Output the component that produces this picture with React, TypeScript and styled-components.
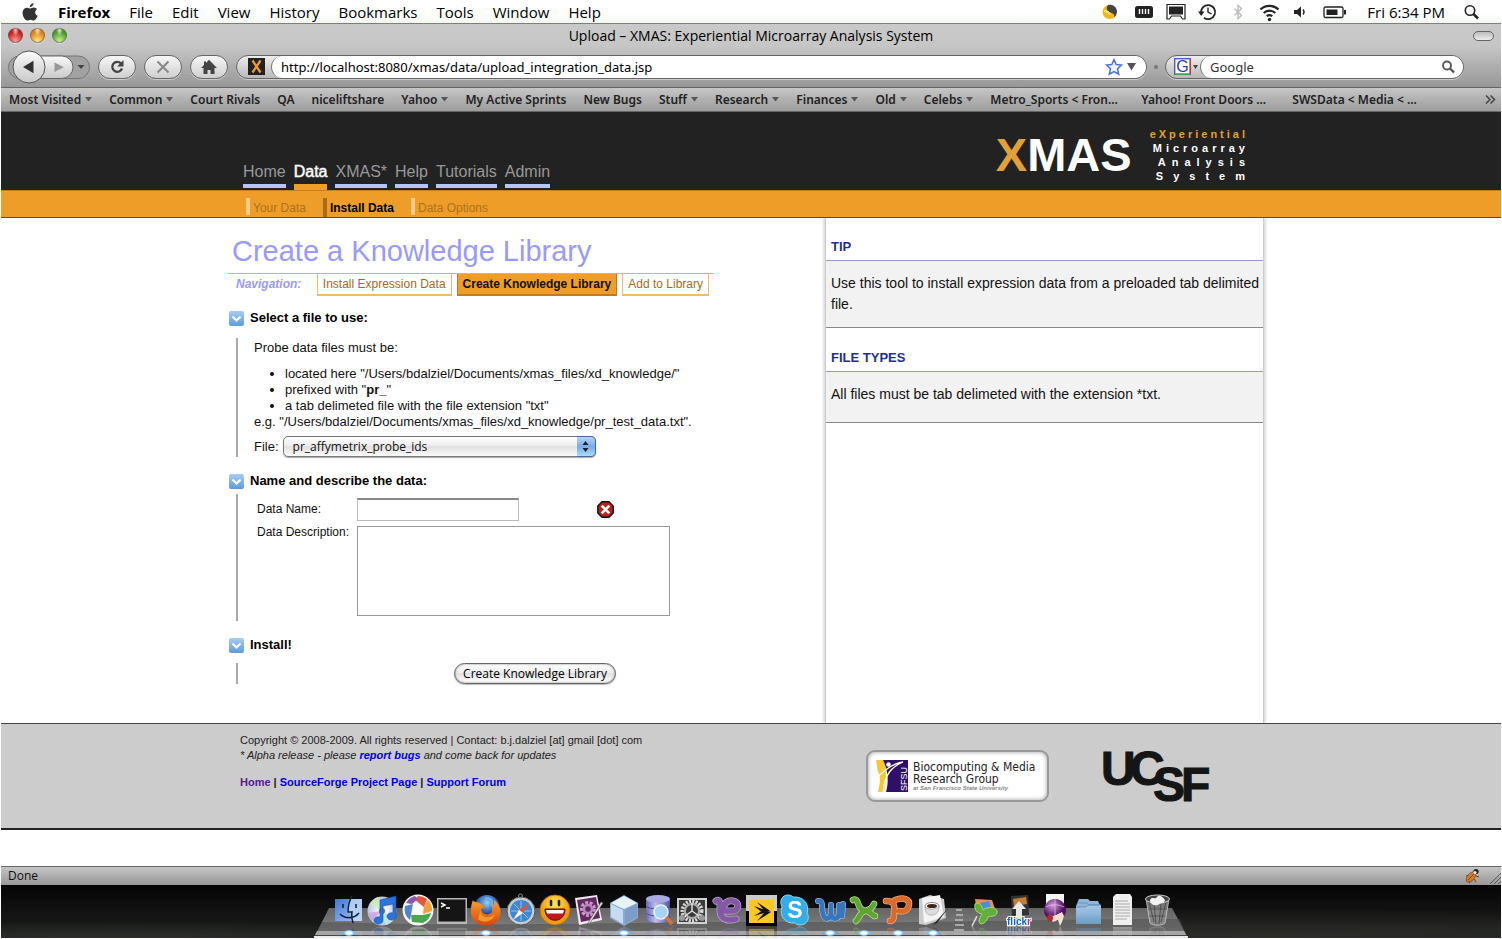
import React from "react";
import styled, { createGlobalStyle } from "styled-components";

const ui = `"Open Sans", "Noto Sans", sans-serif`;
const uiWide = `"Noto Sans", "Open Sans", sans-serif`;
const body = `"Liberation Sans", Arial, sans-serif`;

const Global = createGlobalStyle`
  * { box-sizing: border-box; }
  body { margin: 0; background: #fff; font-family: ${body}; font-size: 13px; color: #111; }
  a { text-decoration: none; color: inherit; }
  button, input, select, textarea { font: inherit; color: inherit; }
  svg { display: block; flex: none; overflow: visible; }
`;

const Screen = styled.div`
  display: flex;
  flex-direction: column;
  min-height: 100vh;
  padding: 0 1px 1px;
`;

/* ---------- system menu bar ---------- */
const MenuBar = styled.header`
  display: flex;
  align-items: center;
  justify-content: space-between;
  height: 23px;
  padding: 0 20px;
  background: linear-gradient(#fff 60%, #f3f8ee);
  font-family: ${ui};
  font-size: 15px;
  color: #000;
`;
const MenuGroup = styled.nav<{ $gap: number }>`
  display: flex;
  align-items: center;
  gap: ${(p) => p.$gap}px;
`;
const MenuItem = styled.button<{ $strong?: boolean }>`
  border: 0;
  padding: 0;
  background: none;
  line-height: 22px;
  font-weight: ${(p) => (p.$strong ? 700 : 400)};
`;
const Clock = styled.time`
  padding-left: 3px;
  line-height: 22px;
  white-space: nowrap;
`;

/* ---------- browser window chrome ---------- */
const Chrome = styled.div`
  border-top: 1px solid #7c7f7a;
  background: linear-gradient(#c9c9c9 0, #c6c6c6 22px, #969696 64px);
  font-family: ${ui};
`;
const TitleBar = styled.div`
  display: grid;
  grid-template-columns: 80px 1fr 80px;
  align-items: center;
  height: 23px;
  padding: 0 7px;
`;
const Title = styled.h2`
  margin: 0;
  text-align: center;
  font-size: 14px;
  font-weight: 400;
  line-height: 20px;
  color: #000;
`;
const Lights = styled.div`
  display: flex;
  gap: 7px;
`;
const Light = styled.button<{ $tone: string; $glow: string }>`
  width: 15px;
  height: 15px;
  padding: 0;
  border: 1px solid #5558;
  border-radius: 50%;
  background: radial-gradient(ellipse at 50% 10%, #fffc 0, #fff0 35%),
    radial-gradient(circle at 50% 90%, ${(p) => p.$glow} 0, ${(p) => p.$tone} 65%);
  box-shadow: 0 1px 0 #ddd;
`;
const Pill = styled.button`
  justify-self: end;
  width: 21px;
  height: 10px;
  padding: 0;
  border: 1px solid #666;
  border-radius: 5px;
  background: linear-gradient(#bbb, #eee);
`;
const Tools = styled.div`
  display: flex;
  align-items: center;
  gap: 8px;
  height: 40px;
  padding: 0 37px 1px 7px;
`;
const RoundButton = styled.button`
  display: flex;
  align-items: center;
  justify-content: center;
  width: 38px;
  height: 24px;
  padding: 0;
  border: 1px solid #666;
  border-radius: 12px;
  background: linear-gradient(#f6f6f6, #cfcfcf);
  box-shadow: 0 1px 0 #ccc;
`;
const Field = styled.div<{ $width?: number }>`
  display: flex;
  flex: ${(p) => (p.$width ? `0 0 ${p.$width}px` : "1")};
  height: 24px;
  overflow: hidden;
  border: 1px solid #666;
  border-radius: 12px;
  background: linear-gradient(#eee, #b9b9b9);
  box-shadow: 0 1px 0 #ccc;
`;
const FieldLead = styled.button<{ $pad: number }>`
  display: flex;
  align-items: center;
  justify-content: flex-end;
  gap: 2px;
  width: 34px;
  padding: 0 ${(p) => p.$pad}px 0 0;
  border: 0;
  background: none;
`;
const FieldBody = styled.div`
  display: flex;
  flex: 1;
  align-items: center;
  gap: 3px;
  padding: 0 8px 0 9px;
  border-left: 1px solid #777;
  border-radius: 12px;
  background: #fff;
`;
const FieldInput = styled.input<{ $soft?: boolean }>`
  flex: 1;
  min-width: 0;
  padding: 0;
  border: 0;
  outline: 0;
  background: none;
  font-family: ${uiWide};
  font-size: 13px;
  color: ${(p) => (p.$soft ? "#333" : "#000")};
`;
const Dot = styled.span`
  width: 4px;
  height: 4px;
  margin: 0 -1px;
  border-radius: 50%;
  background: #777;
`;
const Bookmarks = styled.nav`
  display: flex;
  align-items: center;
  gap: 17px;
  height: 25px;
  padding: 0 5px 0 8px;
  border-top: 1px solid #666;
  border-bottom: 1px solid #666;
  background: linear-gradient(#c6c6c6, #9c9c9c);
  font-family: ${uiWide};
  font-size: 12px;
  font-weight: 600;
  line-height: 20px;
  color: #222;
  white-space: nowrap;
`;
const Bookmark = styled.a<{ $long: boolean }>`
  display: flex;
  align-items: center;
  gap: 4px;
  min-width: ${(p) => (p.$long ? "134px" : "0")};
`;
const More = styled.button`
  margin-left: auto;
  padding: 0;
  border: 0;
  background: none;
`;

/* ---------- site header ---------- */
const SiteHeader = styled.header`
  background: #222;
`;
const Wrap = styled.div`
  display: flex;
  justify-content: space-between;
  width: 100%;
  max-width: 1046px;
  margin: 0 auto;
  padding-right: 10px;
`;
const TopRow = styled(Wrap)`
  align-items: flex-end;
  height: 78px;
  padding: 0 29px 0 15px;
`;
const MainNav = styled.nav`
  display: flex;
  align-items: flex-end;
  gap: 8px;
`;
const MainLink = styled.a<{ $active?: boolean }>`
  border-bottom: ${(p) => (p.$active ? "6px solid #ee9d28" : "4px solid #b9c4f4")};
  margin-bottom: ${(p) => (p.$active ? 0 : 2)}px;
  padding-bottom: 3px;
  font-size: 16px;
  line-height: 18px;
  color: ${(p) => (p.$active ? "#fff" : "#999")};
  -webkit-text-stroke: ${(p) => (p.$active ? "1px #fff8" : "0")};
`;
const Brand = styled.div`
  display: flex;
  align-items: center;
  gap: 18px;
  padding-bottom: 7px;
  font-weight: 700;
  color: #fff;
`;
const BrandName = styled.div`
  font-size: 47px;
  line-height: 52px;
`;
const Amber = styled.span`
  color: #e2a039;
`;
const BrandLines = styled.div`
  font-size: 11px;
  line-height: 14px;
  text-align: right;
`;
const BrandLine = styled.div<{ $track: number }>`
  letter-spacing: ${(p) => p.$track}px;
  margin-right: -${(p) => p.$track}px;
`;
const SubBar = styled.div`
  border-top: 1px solid #c37f1e;
  border-bottom: 1px solid #5d4a2d;
  background: #ee9d28;
`;
const SubNav = styled(Wrap)`
  justify-content: flex-start;
  gap: 17px;
  height: 26px;
  padding: 7px 0 0 18px;
`;
const SubLink = styled.a<{ $active?: boolean }>`
  height: ${(p) => (p.$active ? 19 : 17)}px;
  padding-left: 3px;
  border-left: 4px solid ${(p) => (p.$active ? "#a66c19" : "#f8cd8c")};
  font-size: 12px;
  font-weight: ${(p) => (p.$active ? 700 : 400)};
  line-height: 20px;
  color: ${(p) => (p.$active ? "#000" : "#b0711a")};
`;

/* ---------- page body ---------- */
const PageBody = styled(Wrap)`
  align-items: stretch;
`;
const Content = styled.main`
  width: 486px;
  padding: 15px 0 39px;
`;
const Heading = styled.h1`
  margin: 0 0 4px 4px;
  font-size: 29px;
  font-weight: 400;
  line-height: 36px;
  color: #99f;
`;
const StepNav = styled.nav`
  display: flex;
  gap: 5px;
  padding: 0 5px 0 8px;
  border-top: 1px solid #f0b050;
  white-space: nowrap;
`;
const StepLabel = styled.span`
  margin-right: auto;
  font-size: 12px;
  font-weight: 700;
  font-style: italic;
  line-height: 20px;
  color: #99f;
`;
const Step = styled.a<{ $active?: boolean }>`
  padding: 0 5px;
  border: solid ${(p) => (p.$active ? "#c07c1c" : "#f3ba68")};
  border-width: 0 1px 2px;
  background: ${(p) => (p.$active ? "#ee9d28" : "#fff")};
  font-size: 12px;
  font-weight: ${(p) => (p.$active ? 700 : 400)};
  line-height: 20px;
  color: ${(p) => (p.$active ? "#111" : "#a56b1b")};
`;
const Section = styled.section`
  padding-top: 12px;
  & + & { padding-top: 14px; }
`;
const SectionHead = styled.h3`
  display: flex;
  align-items: center;
  gap: 6px;
  margin: 0;
  padding-left: 1px;
  font-size: 13px;
  font-weight: 700;
  line-height: 20px;
  color: #000;
`;
const SectionBody = styled.div<{ $indent: number; $gap: number }>`
  margin: ${(p) => p.$gap}px 0 0 8px;
  padding-left: ${(p) => p.$indent}px;
  border-left: 2px solid #aaa;
  font-size: 13px;
  line-height: 16px;
`;
const Para = styled.p`
  margin: 0;
  padding: 2px 0 10px;
`;
const List = styled.ul`
  margin: 0;
  padding: 0 0 0 31px;
  white-space: nowrap;
`;
const Example = styled.p`
  margin: 0 0 6px;
  white-space: nowrap;
`;
const FileRow = styled.div`
  display: flex;
  align-items: center;
  gap: 4px;
`;
const SelectBox = styled.div`
  position: relative;
  width: 313px;
`;
const Select = styled.select`
  display: block;
  width: 100%;
  height: 21px;
  padding: 0 26px 0 9px;
  appearance: none;
  border: 1px solid #777;
  border-radius: 5px;
  background: linear-gradient(#fff, #ededed 45%, #e0e0e0 50%, #fafafa);
  box-shadow: 0 1px 1px #aaa;
  font-family: ${ui};
  font-size: 12px;
`;
const Stepper = styled.span`
  position: absolute;
  top: 0;
  right: 0;
  display: flex;
  align-items: center;
  justify-content: center;
  width: 19px;
  height: 21px;
  border: 1px solid #456a9c;
  border-left: 0;
  border-radius: 0 5px 5px 0;
  background: linear-gradient(#b9d4f4, #78abea 50%, #a9dcfb);
  pointer-events: none;
`;
const FormGrid = styled.div`
  display: grid;
  grid-template-columns: 100px 1fr;
  row-gap: 5px;
  padding: 4px 0 5px;
  font-size: 12px;
`;
const Label = styled.label`
  line-height: 13px;
  align-self: start;
`;
const NameLabel = styled(Label)`
  line-height: 22px;
`;
const NameCell = styled.div`
  display: flex;
  align-items: center;
  gap: 78px;
`;
const TextInput = styled.input`
  width: 162px;
  height: 23px;
  border: 1px solid #bbb;
  border-top: 2px solid #888;
  background: #fff;
`;
const TextArea = styled.textarea`
  display: block;
  width: 313px;
  height: 90px;
  border: 1px solid #999;
  resize: none;
`;
const SubmitRow = styled.div`
  display: flex;
  padding-left: 216px;
`;
const Submit = styled.button`
  width: 162px;
  height: 21px;
  padding: 0;
  border: 1px solid #666;
  border-radius: 11px;
  background: linear-gradient(#fff, #eee 45%, #e2e2e2 50%, #fff);
  box-shadow: inset 0 0 2px #666, 0 1px 1px #bbb;
  font-family: ${ui};
  font-size: 12px;
  line-height: 17px;
  white-space: nowrap;
  color: #000;
`;

const Sidebar = styled.aside`
  width: 439px;
  border: solid #ccc;
  border-width: 0 1px;
  box-shadow: -2px 0 2px #ddd, 2px 0 2px #ddd;
  clip-path: inset(0 -4px);
`;
const TipTitle = styled.h3`
  margin: 0;
  padding: 19px 5px 4px;
  border-bottom: 1px solid #99c;
  font-size: 13px;
  line-height: 19px;
  color: #1e2f92;
`;
const TipText = styled.p`
  min-height: 51px;
  margin: 0 0 1px;
  padding: 12px 0 12px 5px;
  border-bottom: 1px solid #888;
  background: #f2f2f2;
  font-size: 14px;
  line-height: 21px;
`;

/* ---------- footer ---------- */
const Footer = styled.footer`
  border-top: 1px solid #444;
  border-bottom: 2px solid #222;
  background: #ccc;
`;
const FooterRow = styled(Wrap)`
  height: 104px;
  padding: 9px 64px 0 12px;
`;
const Legal = styled.div`
  font-size: 11px;
  line-height: 15px;
  color: #222;
`;
const Line = styled.p<{ $italic?: boolean }>`
  margin: 0;
  font-style: ${(p) => (p.$italic ? "italic" : "normal")};
`;
const Links = styled.p`
  margin: 12px 0 0;
  font-weight: 700;
`;
const FootLink = styled.a<{ $visited?: boolean }>`
  font-weight: 700;
  color: ${(p) => (p.$visited ? "#551a8b" : "#0000e0")};
`;
const Logos = styled.div`
  display: flex;
  gap: 54px;
  padding-top: 17px;
`;
const Partner = styled.a`
  display: flex;
  align-items: center;
  gap: 4px;
  width: 183px;
  height: 52px;
  padding-left: 8px;
  border: 2px solid #999;
  border-radius: 9px;
  background: #fff;
  box-shadow: inset 0 0 4px #999;
  color: #222;
`;
const PartnerText = styled.span`
  display: flex;
  flex-direction: column;
  font-family: "DejaVu Sans Condensed", "DejaVu Sans", sans-serif;
  font-size: 12px;
  line-height: 12px;
  white-space: nowrap;
`;
const PartnerSmall = styled.i`
  font-family: ${body};
  font-size: 6px;
  font-weight: 700;
  line-height: 7px;
  color: #888;
`;

/* ---------- status bar and dock ---------- */
const Gap = styled.div`
  flex: 1;
  min-height: 36px;
`;
const StatusBar = styled.div`
  display: flex;
  align-items: center;
  justify-content: space-between;
  height: 19px;
  padding-left: 7px;
  border-top: 1px solid #666;
  background: linear-gradient(#c4c4c4, #979797);
  font-family: ${ui};
  font-size: 12px;
  line-height: 18px;
`;
const StatusIcons = styled.div`
  display: flex;
  gap: 10px;
`;
const Desktop = styled.div`
  position: relative;
  display: flex;
  justify-content: center;
  height: 53px;
  overflow: hidden;
  background: radial-gradient(ellipse at 85% 100%, #2c2d29, #2c2d2900 40%),
    radial-gradient(ellipse at 8% 100%, #2d2f2b, #2d2f2b00 22%),
    linear-gradient(#050505, #1d1f1d);
`;
const Shelf = styled.svg`
  position: absolute;
  top: 20px;
  left: 50%;
  margin-left: -437px;
`;
const DockRow = styled.div`
  position: relative;
  display: flex;
  width: 846px;
  padding: 9px 0 0 4px;
`;
const DockGroup = styled.div<{ $n: number }>`
  display: grid;
  flex: ${(p) => p.$n};
  grid-template-columns: repeat(${(p) => p.$n}, 1fr);
  justify-items: center;
  align-items: start;
`;
const DockApp = styled.button<{ $running?: boolean }>`
  position: relative;
  display: flex;
  align-items: flex-start;
  height: 44px;
  padding: 0;
  border: 0;
  background: none;
  svg { -webkit-box-reflect: below 0 linear-gradient(#0000 60%, #0006); }
  &::after {
    content: "";
    display: ${(p) => (p.$running ? "block" : "none")};
    position: absolute;
    left: 10px;
    top: 36px;
    width: 12px;
    height: 6px;
    border-radius: 50%;
    background: radial-gradient(#fff 30%, #6bbcff 60%, #6bbcff00);
  }
`;
const Divider = styled.svg`
  margin: 15px 3px 0;
`;

const Caret = () => (
  <svg width="7" height="5" viewBox="0 0 7 5"><path d="M0 0h7L3.500 4.500z" fill="#555" /></svg>
);
const Toggle = () => (
  <svg width="15" height="15" viewBox="0 0 15 15">
    <defs>
      <linearGradient id="tg" x1="0" y1="0" x2="0" y2="1">
        <stop offset="0" stopColor="#a9cdf2" /><stop offset="1" stopColor="#5d9ae0" />
      </linearGradient>
    </defs>
    <rect width="15" height="15" rx="2" fill="url(#tg)" />
    <path d="M3.500 5.500l4 4 4-4" fill="none" stroke="#fff" strokeWidth="2.200" />
  </svg>
);

const bookmarks: [string, boolean][] = [
  ["Most Visited", true], ["Common", true], ["Court Rivals", false], ["QA", false],
  ["niceliftshare", false], ["Yahoo", true], ["My Active Sprints", false], ["New Bugs", false],
  ["Stuff", true], ["Research", true], ["Finances", true], ["Old", true], ["Celebs", true],
  ["Metro_Sports < Fron...", false], ["Yahoo! Front Doors ...", false], ["SWSData < Media < ...", false],
];

const GradientDefs = styled.svg`
  position: absolute;
`;
const Gradients = () => (
  <GradientDefs width="0" height="0" aria-hidden="true">
    <defs>
      <linearGradient id="gFinder" x1="0" y1="0" x2="1" y2="1"><stop offset="0" stopColor="#3f76d6" /><stop offset="1" stopColor="#a9cdf6" /></linearGradient>
      <radialGradient id="gDisc"><stop offset="0" stopColor="#888" /><stop offset=".3" stopColor="#f4f4ff" /><stop offset="1" stopColor="#b8c6d8" /></radialGradient>
      <radialGradient id="gGlobe" cx=".5" cy=".3"><stop offset="0" stopColor="#8fd4f8" /><stop offset="1" stopColor="#12308c" /></radialGradient>
      <radialGradient id="gFace" cx=".5" cy=".3"><stop offset="0" stopColor="#ffe95a" /><stop offset="1" stopColor="#f09a0c" /></radialGradient>
      <linearGradient id="gFox" x1="0" y1="0" x2="0" y2="1"><stop offset="0" stopColor="#f5a02a" /><stop offset="1" stopColor="#d8440c" /></linearGradient>
      <linearGradient id="gDb"><stop offset="0" stopColor="#6a69b8" /><stop offset=".4" stopColor="#c0c1f2" /><stop offset="1" stopColor="#5554a0" /></linearGradient>
      <linearGradient id="gFold" x1="0" y1="0" x2="0" y2="1"><stop offset="0" stopColor="#a8cae4" /><stop offset="1" stopColor="#6c9cc6" /></linearGradient>
      <radialGradient id="gPurp" cx=".4" cy=".3"><stop offset="0" stopColor="#d79be0" /><stop offset="1" stopColor="#501060" /></radialGradient>
    </defs>
  </GradientDefs>
);

type DockItem = { name: string; running?: boolean; art: React.ReactNode };
const apps: DockItem[] = [
  { name: "Finder", running: true, art: <g><rect x="2" y="5" width="27" height="22" fill="url(#gFinder)" /><path d="M16 5h13v22H18c0-4-1-6-1-8h-3c0-6 1-10 2-14z" fill="#c4dbf7" opacity=".75" /><path d="M19 2c-3 5-4 10-4 16h4c-1 4 0 7 1 11M7 20c5 5 14 5 19-1M10 10v4M23 10v4" fill="none" stroke="#14233f" strokeWidth="1.600" /></g> },
  { name: "Music", art: <g><circle cx="15" cy="17" r="14.500" fill="url(#gDisc)" /><path d="M15 17L3 10a14 14 0 0 1 8-7z" fill="#c8f0b0" opacity=".8" /><path d="M15 17L5 27a14 14 0 0 1-4-8z" fill="#c7a3e8" opacity=".8" /><path d="M15 17l4 14a14 14 0 0 0 8-6z" fill="#b8e8e0" /><circle cx="15" cy="17" r="3" fill="#777" /><path d="M13 6l16-4v20a4.500 3.600 0 1 1-3-3V10l-10 2v14a4.500 3.600 0 1 1-3-3z" fill="#2c74dd" stroke="#164a9e" strokeWidth=".6" /></g> },
  { name: "Photos", art: <g><circle cx="16" cy="16" r="15.500" fill="#f4f4f4" /><path d="M16 2a14 14 0 0 1 9 3l-3 8-9-7z" fill="#e3573c" /><path d="M26 6a14 14 0 0 1 4 11l-9 3 1-8z" fill="#f2a13a" /><path d="M29 19a14 14 0 0 1-8 10l-11-1-1-7h12z" fill="#4aa84c" /><path d="M8 26a14 14 0 0 1-5-14l8-2z" fill="#4f83d4" /><path d="M4 9a14 14 0 0 1 9-7l3 3-6 5z" fill="#8d56b0" /><path d="M11 10l9 2-1 9-9-1z" fill="#fff" /></g> },
  { name: "Terminal", art: <g><rect x="1" y="4" width="30" height="26" fill="#b8b8b8" /><rect x="2.500" y="5.500" width="27" height="22" fill="#151515" /><path d="M5 9l4 2-4 2M10 14h4" fill="none" stroke="#fff" strokeWidth="1.400" /></g> },
  { name: "Firefox", running: true, art: <g><circle cx="17" cy="14" r="13" fill="url(#gGlobe)" /><path d="M15 4c4 1 8 0 7 5s4 4 1 8" fill="none" stroke="#6fb6e8" strokeWidth="2" /><path d="M3 6c1 3 4 1 8 4l4 3-4 2c1 6 8 7 11 3-1-5 3-7 2-12 5 3 8 10 6 16-2 7-8 10-15 9.500C6 31 0 25 1 15c0-4 1-6 2-9z" fill="url(#gFox)" /><path d="M11 15c-3 8 8 11 14 5-2 8-12 10-17 5" fill="#f8c23c" opacity=".6" /></g> },
  { name: "Safari", art: <g><circle cx="16" cy="17" r="14" fill="#c4ccd4" stroke="#555" /><circle cx="16" cy="17" r="11" fill="#3f87cf" /><path d="M16 7v20M6 17h20M9 10l14 14" stroke="#a9d2f2" strokeWidth=".8" /><path d="M24 8l-6 11-4-3z" fill="#e8532c" /><path d="M8 26l6-10 4 3z" fill="#f4f4f4" /><circle cx="15.500" cy="2" r="2" fill="none" stroke="#888" /></g> },
  { name: "Messenger", art: <g><circle cx="16" cy="16" r="15" fill="url(#gFace)" stroke="#b86a08" strokeWidth=".8" /><path d="M6 15h20c0 15-20 15-20 0z" fill="#c01818" stroke="#5a0a0a" /><path d="M7 16h18l-1 3.500H8z" fill="#fff" /><path d="M12 7v4M20 7v4" stroke="#222" strokeWidth="2.600" strokeLinecap="round" /></g> },
  { name: "Editor", art: <g><path d="M2 4l22-3 5 25-23 5z" fill="#efe8f0" /><path d="M4 6l19-3 4 21-19 4z" fill="#63285f" /><circle cx="15" cy="15" r="6.500" fill="none" stroke="#c69bc8" strokeWidth="3" strokeDasharray="3 1.500" /><circle cx="15" cy="15" r="4" fill="none" stroke="#b888ba" strokeWidth="2.500" /><path d="M30 9L17 29l-2 2 1-4L28 8z" fill="#ddd" stroke="#555" strokeWidth=".6" /></g> },
  { name: "VirtualBox", running: true, art: <g><path d="M16 1l14 8v15l-14 8-14-8V9z" fill="#8aabd0" /><path d="M16 2l13 7-13 6L3 9z" fill="#e8f4f4" /><path d="M3 10l12 6v14L3 23z" fill="#c5dbf2" /><path d="M29 10l-12 6v14l12-7z" fill="#7d9cc8" /></g> },
  { name: "Database", art: <g><path d="M4 5v20c2 5 22 5 24 0V5z" fill="url(#gDb)" /><ellipse cx="16" cy="5" rx="12" ry="4" fill="#a9a8e0" /><path d="M4 12c3 4 21 4 24 0M4 19c3 4 21 4 24 0" fill="none" stroke="#4e4d92" /><circle cx="19" cy="18" r="7" fill="#a5d4f4" stroke="#e8f0f8" strokeWidth="1.500" /><path d="M24 23l6 7" stroke="#e0702c" strokeWidth="3.500" /></g> },
  { name: "Settings", art: <g><rect x="1" y="4" width="30" height="26" fill="#d2d2d2" /><rect x="3" y="6" width="26" height="22" fill="#3a3a3a" /><circle cx="16" cy="17" r="9.500" fill="none" stroke="#d8d8d8" strokeWidth="4" strokeDasharray="2 1.200" /><circle cx="16" cy="17" r="7" fill="none" stroke="#aaa" strokeWidth="2" /><path d="M16 17V9M16 17l-7 5M16 17l7 5" stroke="#ddd" strokeWidth="1.500" /><circle cx="6" cy="24" r="3" fill="#999" /><circle cx="26" cy="24" r="3" fill="#999" /></g> },
  { name: "Entourage", art: <g fill="none" strokeLinecap="round"><path d="M5 7c5-3 4 4 4 9 0 8 6 12 16 9M13 17h9c6-1 7-9 0-10-5-1-9 2-10 8" stroke="#c0a0d4" strokeWidth="7" /><path d="M5 7c5-3 4 4 4 9 0 8 6 12 16 9M13 17h9c6-1 7-9 0-10-5-1-9 2-10 8" stroke="#8259a3" strokeWidth="5.500" /></g> },
  { name: "Sprint", art: <g><path d="M1 1h31v31H1z" fill="#000" /><path d="M1 1h31v16h-3V6H4v11H1z" fill="#ccc" /><path d="M4 6h25v23H4z" fill="#fbc823" /><path d="M12 8l14 9.500-6 0zM9 12l15 5.500-8 0zM12 27l14-9-6 0zM9 22l15-4.500-8 0z" fill="#111" /></g> },
  { name: "Skype", art: <g><path d="M9 1c3 0 4 1 5 2 10-1 17 7 14 16 3 4 1 12-7 12-3 0-4-1-5-2C6 30 0 22 3 13 0 7 3 1 9 1z" fill="#31aee8" stroke="#8fd6f7" /><text x="16" y="24" textAnchor="middle" fontFamily="Liberation Sans, Arial, sans-serif" fontWeight="700" fontSize="23" fill="#fff">S</text></g> },
  { name: "Word", running: true, art: <g fill="none" strokeLinecap="round" strokeLinejoin="round"><path d="M4 7c6-1 3 8 5 13 2 7 7 5 8 0V11M17 20c1 6 7 6 8 0V11M29 10l-1 12" stroke="#9cc4ee" strokeWidth="6" /><path d="M4 7c6-1 3 8 5 13 2 7 7 5 8 0V11M17 20c1 6 7 6 8 0V11M29 10l-1 12" stroke="#3775bd" strokeWidth="4.800" /></g> },
  { name: "Excel", running: true, art: <g fill="none" strokeLinecap="round"><path d="M5 6c6-3 4 9 10 10 6 2 9-2 11-6M8 27c3-2 3-8 9-10 5-1 7 5 10 5" stroke="#b8e08c" strokeWidth="6.500" /><path d="M5 6c6-3 4 9 10 10 6 2 9-2 11-6M8 27c3-2 3-8 9-10 5-1 7 5 10 5" stroke="#5ea532" strokeWidth="5" /></g> },
  { name: "PowerPoint", running: true, art: <g fill="none" strokeLinecap="round"><path d="M4 7c8 0 9 4 8 11 0 5 0 9-4 9M13 6c8-3 15-1 14 5-1 6-6 7-10 6" stroke="#f2ab7c" strokeWidth="6.500" /><path d="M4 7c8 0 9 4 8 11 0 5 0 9-4 9M13 6c8-3 15-1 14 5-1 6-6 7-10 6" stroke="#db6a2a" strokeWidth="5" /></g> },
  { name: "Notes", running: true, art: <g><path d="M2 5l11-4 14 4 2 19-20 7-7-1z" fill="#ccc" /><path d="M5 4l18-3 4 22-20 6z" fill="#f4f4f4" /><ellipse cx="15" cy="12" rx="7" ry="3.500" fill="#fff" stroke="#888" /><ellipse cx="15" cy="12" rx="5" ry="2" fill="#3a2416" /><path d="M8 13c0 6 3 9 8 8s6-5 6-9c-3 4-11 4-14 1z" fill="#ddd" stroke="#999" strokeWidth=".6" /><path d="M32 13L20 29l-4 2z" fill="#222" /></g> },
];
const shortcuts: DockItem[] = [
  { name: "Downloads", art: <g><path d="M6 5l17 1 4 12H8z" fill="#e88d5c" /><path d="M11 9l9-2 3 9-9 1z" fill="#4c8fd8" /><path d="M6 10c4-3 7 2 8 6 4-3 12-4 14 1 1 6-6 5-9 6-2 6-7 9-9 5 0-4 2-6 3-8-5-1-8-4-7-10z" fill="#63b038" stroke="#a5db77" /><path d="M3 32l5-10" stroke="#ddd" strokeWidth="1.500" /></g> },
  { name: "Uploader", art: <g><path d="M8 2l17-1 1 20-17 1z" fill="#333" /><path d="M10 5l13-2 1 7-13 2z" fill="#c77d33" /><path d="M16 7l7 8h-4v9h-6v-9H9z" fill="#e8e8e8" /><text x="16" y="31" textAnchor="middle" fontFamily="Liberation Sans, Arial, sans-serif" fontWeight="700" fontSize="10" fill="#0b62d6" stroke="#fff" strokeWidth="2" paintOrder="stroke">flick<tspan fill="#e8268b">r</tspan></text></g> },
  { name: "Globe", art: <g><rect x="8" y="0" width="18" height="12" fill="#f5f5f5" /><circle cx="17" cy="16" r="11" fill="url(#gPurp)" /><path d="M8 13c5-3 12-3 18 0M11 21c4 2 9 2 13 0M17 5v22" stroke="#e3b9ea" strokeWidth=".8" fill="none" /><path d="M12 23l6-2 6-3 2 4-2 6-2 4-2-6-5 2z" fill="#eee0d2" /><circle cx="12" cy="24" r="3" fill="#c0202a" /></g> },
  { name: "Folder", art: <g><path d="M4 12l3-7h9l2 2h8l3 6v17H4z" fill="#8fb6d6" /><path d="M4 13h10l2-2h13v19H4z" fill="url(#gFold)" /><path d="M6 9h9l2 2h10M4 13h10l2-2h13" fill="none" stroke="#5b8ab4" strokeWidth=".8" /></g> },
  { name: "Documents", art: <g><path d="M7 3l3-3h14l2 3v28H7z" fill="#efefef" /><path d="M9 7h13M9 10h15M9 13h15M9 16h15M9 19h15M9 22h15M9 25h12" stroke="#aaa" /></g> },
  { name: "Trash", art: <g><path d="M5 5l4 24c3 3 12 3 15 0l4-24z" fill="#8a8a8a" opacity=".85" /><path d="M8 8l5 20M13 9l2 21M20 9l-2 21M25 8l-5 20M7 15h19M8 22h16" stroke="#444" strokeWidth=".8" /><path d="M5 5l4 24c3 3 12 3 15 0l4-24" fill="none" stroke="#ccc" strokeWidth=".8" /><ellipse cx="16.500" cy="5" rx="12" ry="4" fill="#444" stroke="#ccc" /><path d="M9 6c2-4 5 0 7-3s6 0 8 3c-1 5-5 2-7 5-4 1-8-1-8-5z" fill="#f2f2f2" /></g> },
];

const DockIcons = ({ items }: { items: DockItem[] }) => (
  <DockGroup $n={items.length}>
    {items.map((a) => (
      <DockApp key={a.name} $running={a.running} aria-label={a.name}>
        <svg width="32" height="32" viewBox="0 0 32 32">{a.art}</svg>
      </DockApp>
    ))}
  </DockGroup>
);

export default function App() {
  return (
    <Screen>
      <Global />
      <Gradients />
      <MenuBar>
        <MenuGroup $gap={19}>
          <svg width="18" height="20" viewBox="0 0 18 20">
            <path d="M12.500 1c.2 2.200-1.700 4.300-3.800 4.200C8.500 3.200 10.500 1.200 12.500 1zM16 7.200c-2.600 1.700-2.300 5.400.6 6.600-.7 2-2.200 4.700-3.900 4.700-1.300 0-1.700-.8-3.200-.8s-2 .8-3.200.8C4 18.500.8 13.500 1.700 9.500c.7-3.200 3.300-4 4.700-3.800 1.200.1 2 .8 2.900.8.800 0 1.900-.9 3.500-.9 1.300.1 2.400.6 3.200 1.600z" fill="#333" />
          </svg>
          <MenuItem $strong>Firefox</MenuItem>
          {["File", "Edit", "View", "History", "Bookmarks", "Tools", "Window", "Help"].map((m) => (
            <MenuItem key={m}>{m}</MenuItem>
          ))}
        </MenuGroup>
        <MenuGroup $gap={12}>
          <svg width="20" height="20" viewBox="0 0 20 20"><circle cx="7.500" cy="10" r="7" fill="#f7b51c" /><path d="M6 3a7 7 0 1 1 4 13.500c3-1 3-4 0-5.500C6 10 3 7 6 3z" fill="#444" /><path d="M2 9c3 0 5 1 6 4" fill="none" stroke="#ffe27a" strokeWidth="2" /></svg>
          <svg width="20" height="20" viewBox="0 0 20 20"><rect x="1" y="4" width="18" height="12" rx="2.500" fill="#222" /><path d="M5.500 7v5M8.500 7v5M11.500 7v5M14.500 7v5" stroke="#fff" strokeWidth="1.400" /></svg>
          <svg width="20" height="20" viewBox="0 0 20 20"><path d="M1 2.500h18v14.500h-2.500l-2-3h-9l-2 3H1z" fill="#fff" stroke="#222" strokeWidth="1.200" /><rect x="3" y="4.500" width="14" height="8" fill="#222" /></svg>
          <svg width="20" height="20" viewBox="0 0 20 20"><path d="M3.200 11A7 7 0 1 1 6 15.700" fill="none" stroke="#222" strokeWidth="1.800" /><path d="M0 9.500h6.500L3.200 14z" fill="#222" /><path d="M10 5.500V10l3.500 2" fill="none" stroke="#222" strokeWidth="1.400" /></svg>
          <svg width="20" height="20" viewBox="0 0 20 20"><path d="M4.500 6.500l7 7-3.500 3v-13l3.500 3-7 7" fill="none" stroke="#bbb" strokeWidth="1.400" /></svg>
          <svg width="20" height="20" viewBox="0 0 20 20"><path d="M-1.500 7.500a13 13 0 0 1 18 0M1.700 11a8.500 8.500 0 0 1 11.600 0M4.700 14.200a4.500 4.500 0 0 1 5.600 0" fill="none" stroke="#222" strokeWidth="2.200" /><circle cx="7.500" cy="17.500" r="1.700" fill="#222" /></svg>
          <svg width="12" height="20" viewBox="0 0 12 20"><path d="M0 8h3l4-3.500v11L3 12H0z" fill="#222" /><path d="M9 7.500c1.300 1.500 1.300 3.500 0 5" fill="none" stroke="#222" strokeWidth="1.300" /></svg>
          <svg width="34" height="20" viewBox="0 0 34 20"><rect x="6" y="5" width="19" height="10.500" rx="1.500" fill="none" stroke="#222" strokeWidth="1.300" /><rect x="8.500" y="7.500" width="11" height="5.500" fill="#222" /><rect x="26" y="8" width="2" height="4.500" fill="#222" /></svg>
          <Clock>Fri 6:34 PM</Clock>
          <svg width="24" height="20" viewBox="0 0 24 20"><circle cx="13" cy="8.500" r="4.700" fill="none" stroke="#222" strokeWidth="1.600" /><path d="M16.500 12l4.500 4.500" stroke="#222" strokeWidth="2.500" /></svg>
        </MenuGroup>
      </MenuBar>

      <Chrome>
        <TitleBar>
          <Lights>
            <Light $tone="#c8211f" $glow="#ff9d94" aria-label="Close" />
            <Light $tone="#dd8220" $glow="#ffe680" aria-label="Minimize" />
            <Light $tone="#4e9a2c" $glow="#c6f28a" aria-label="Zoom" />
          </Lights>
          <Title>Upload – XMAS: Experiential Microarray Analysis System</Title>
          <Pill aria-label="Toggle toolbar" />
        </TitleBar>
        <Tools>
          <svg width="82" height="34" viewBox="0 0 82 34" role="img" aria-label="Back and forward">
            <defs>
              <linearGradient id="btn" x1="0" y1="0" x2="0" y2="1"><stop offset="0" stopColor="#fafafa" /><stop offset="1" stopColor="#c8c8c8" /></linearGradient>
            </defs>
            <rect x=".5" y="6" width="81" height="22.500" rx="11.200" fill="#a2a2a2" stroke="#777" />
            <rect x="20" y="6" width="45" height="22.500" rx="11.200" fill="url(#btn)" stroke="#666" />
            <path d="M46.500 12.500v9.500l9.500-4.800z" fill="#999" />
            <circle cx="21" cy="17" r="16" fill="url(#btn)" stroke="#555" />
            <path d="M25.500 10.800v12.400L15 17z" fill="#333" />
            <path d="M69.500 15h7l-3.500 4z" fill="#444" />
          </svg>
          <RoundButton aria-label="Reload"><svg width="16" height="16" viewBox="0 0 16 16"><path d="M12 4.500A5 5 0 1 0 13 9.500" fill="none" stroke="#444" strokeWidth="2.300" /><path d="M14.500 1v6.500H8z" fill="#444" /></svg></RoundButton>
          <RoundButton aria-label="Stop"><svg width="16" height="16" viewBox="0 0 16 16"><path d="M2.500 2.500l11 11m0-11l-11 11" stroke="#888" strokeWidth="2" /></svg></RoundButton>
          <RoundButton aria-label="Home page"><svg width="16" height="16" viewBox="0 0 16 16"><path d="M8 .8L16 9h-2.500v6H9.500v-4h-3v4h-4V9H0l3-3V2.500h2V4z" fill="#444" /></svg></RoundButton>
          <Field>
            <FieldLead $pad={6} aria-label="Site information"><svg width="17" height="17" viewBox="0 0 17 17"><rect width="17" height="17" fill="#222" /><path d="M4.500 2.500l8 12M12.500 2.500l-8 12" stroke="#ee9d28" strokeWidth="2.300" /></svg></FieldLead>
            <FieldBody>
              <FieldInput aria-label="Address" defaultValue="http://localhost:8080/xmas/data/upload_integration_data.jsp" />
              <svg width="18" height="18" viewBox="0 0 18 18"><path d="M9 1.500l2.200 5 5.300.6-4 3.600 1.200 5.500L9 13.500l-4.700 2.700 1.200-5.500-4-3.600 5.300-.6z" fill="#eef4ff" stroke="#4774d4" strokeWidth="1.500" /></svg>
              <svg width="12" height="8" viewBox="0 0 12 8"><path d="M1 0h9L5.500 7.500z" fill="#555" /></svg>
            </FieldBody>
          </Field>
          <Dot />
          <Field $width={299}>
            <FieldLead $pad={2} aria-label="Search engine">
              <svg width="17" height="17" viewBox="0 0 17 17"><rect x=".7" y=".7" width="15.600" height="15.600" fill="#fff" stroke="#3a62d8" strokeWidth="1.400" /><path d="M16.300 1v15" stroke="#d8342c" strokeWidth="1.400" /><path d="M1 16.300h15" stroke="#3fa53a" strokeWidth="1.400" /><text x="8.500" y="14" textAnchor="middle" fontFamily="Liberation Sans, Arial, sans-serif" fontSize="16" fill="#1f3fc0">G</text></svg>
              <svg width="5" height="4" viewBox="0 0 5 4"><path d="M0 0h5L2.500 4z" fill="#444" /></svg>
            </FieldLead>
            <FieldBody>
              <FieldInput $soft aria-label="Search" defaultValue="Google" />
              <svg width="13" height="14" viewBox="0 0 13 14"><circle cx="5" cy="5.500" r="4" fill="none" stroke="#555" strokeWidth="1.800" /><path d="M8 8.500l4 4" stroke="#555" strokeWidth="2.400" /></svg>
            </FieldBody>
          </Field>
        </Tools>
        <Bookmarks>
          {bookmarks.map(([name, menu]) => (
            <Bookmark key={name} href="#" $long={name.endsWith("...")}>{name}{menu && <Caret />}</Bookmark>
          ))}
          <More aria-label="More bookmarks"><svg width="11" height="9" viewBox="0 0 11 9"><path d="M1 .5l4 4-4 4M5.500 .5l4 4-4 4" fill="none" stroke="#444" strokeWidth="1.500" /></svg></More>
        </Bookmarks>
      </Chrome>

      <SiteHeader>
        <TopRow>
          <MainNav>
            <MainLink href="#">Home</MainLink>
            <MainLink href="#" $active>Data</MainLink>
            <MainLink href="#">XMAS*</MainLink>
            <MainLink href="#">Help</MainLink>
            <MainLink href="#">Tutorials</MainLink>
            <MainLink href="#">Admin</MainLink>
          </MainNav>
          <Brand>
            <BrandName><Amber>X</Amber>MAS</BrandName>
            <BrandLines>
              <BrandLine $track={3}><Amber>eXperiential</Amber></BrandLine>
              <BrandLine $track={4}>Microarray</BrandLine>
              <BrandLine $track={6}>Analysis</BrandLine>
              <BrandLine $track={10}>System</BrandLine>
            </BrandLines>
          </Brand>
        </TopRow>
        <SubBar>
          <SubNav>
            <SubLink href="#">Your Data</SubLink>
            <SubLink href="#" $active>Install Data</SubLink>
            <SubLink href="#">Data Options</SubLink>
          </SubNav>
        </SubBar>
      </SiteHeader>

      <PageBody>
        <Content>
          <Heading>Create a Knowledge Library</Heading>
          <StepNav>
            <StepLabel>Navigation:</StepLabel>
            <Step href="#">Install Expression Data</Step>
            <Step href="#" $active>Create Knowledge Library</Step>
            <Step href="#">Add to Library</Step>
          </StepNav>
          <Section>
            <SectionHead><Toggle />Select a file to use:</SectionHead>
            <SectionBody $indent={16} $gap={10}>
              <Para>Probe data files must be:</Para>
              <List>
                <li>located here "/Users/bdalziel/Documents/xmas_files/xd_knowledge/"</li>
                <li>prefixed with "<b>pr_</b>"</li>
                <li>a tab delimeted file with the file extension "txt"</li>
              </List>
              <Example>e.g. "/Users/bdalziel/Documents/xmas_files/xd_knowledge/pr_test_data.txt".</Example>
              <FileRow>
                <label htmlFor="file">File:</label>
                <SelectBox>
                  <Select id="file"><option>pr_affymetrix_probe_ids</option></Select>
                  <Stepper><svg width="7" height="11" viewBox="0 0 7 11"><path d="M3.500 0L6.500 4H.5zM3.500 11L.5 7h6z" fill="#222" /></svg></Stepper>
                </SelectBox>
              </FileRow>
            </SectionBody>
          </Section>
          <Section>
            <SectionHead><Toggle />Name and describe the data:</SectionHead>
            <SectionBody $indent={19} $gap={3}>
              <FormGrid>
                <NameLabel htmlFor="name">Data Name:</NameLabel>
                <NameCell>
                  <TextInput id="name" />
                  <svg width="17" height="17" viewBox="0 0 17 17" role="img" aria-label="Required"><path d="M5 .8h7L16.200 5v7L12 16.200H5L.8 12V5z" fill="#b9211a" stroke="#111" strokeWidth="1.400" /><path d="M4.700 4.700l7.600 7.600m0-7.600l-7.600 7.600" stroke="#fff" strokeWidth="2.600" /></svg>
                </NameCell>
                <Label htmlFor="desc">Data Description:</Label>
                <TextArea id="desc" />
              </FormGrid>
            </SectionBody>
          </Section>
          <Section>
            <SectionHead><Toggle />Install!</SectionHead>
            <SectionBody $indent={0} $gap={8}>
              <SubmitRow><Submit>Create Knowledge Library</Submit></SubmitRow>
            </SectionBody>
          </Section>
        </Content>
        <Sidebar>
          <TipTitle>TIP</TipTitle>
          <TipText>Use this tool to install expression data from a preloaded tab delimited file.</TipText>
          <TipTitle>FILE TYPES</TipTitle>
          <TipText>All files must be tab delimeted with the extension *txt.</TipText>
        </Sidebar>
      </PageBody>

      <Footer>
        <FooterRow>
          <Legal>
            <Line>Copyright © 2008-2009. All rights reserved | Contact: b.j.dalziel [at] gmail [dot] com</Line>
            <Line $italic>* Alpha release - please <FootLink href="#">report bugs</FootLink> and come back for updates</Line>
            <Links><FootLink href="#" $visited>Home</FootLink> | <FootLink href="#">SourceForge Project Page</FootLink> | <FootLink href="#">Support Forum</FootLink></Links>
          </Legal>
          <Logos>
            <Partner href="#">
              <svg width="33" height="32" viewBox="0 0 33 32"><path d="M0 0h7c4 6 4 22 1 32H2c2-8 3-16 0-20z" fill="#f6c831" /><path d="M7 0h25v32H10c3-10 2-22-3-32z" fill="#2f1065" /><path d="M0 18C8 12 14 4 27 2 16 7 9 13 7 32" fill="none" stroke="#fff" strokeWidth="1.300" /><circle cx="12.500" cy="4.500" r="2.300" fill="#fff" /><text transform="translate(30.500 31) rotate(-90)" fontFamily="Liberation Sans, Arial, sans-serif" fontSize="9" fill="#fff">SFSU</text></svg>
              <PartnerText>
                <span>Biocomputing &amp; Media</span>
                <span>Research Group</span>
                <PartnerSmall>at San Francisco State University</PartnerSmall>
              </PartnerText>
            </Partner>
            <svg width="107" height="52" viewBox="0 0 107 52" role="img" aria-label="UCSF" fontFamily="Liberation Sans, Arial, sans-serif" fontWeight="700" fontSize="48" fill="#151515" stroke="#151515">
              <text x="-2" y="35">U</text><text x="27" y="35">C</text><text x="50" y="51">S</text><text x="78" y="51">F</text>
            </svg>
          </Logos>
        </FooterRow>
      </Footer>

      <Gap />
      <StatusBar>
        Done
        <StatusIcons>
          <svg width="16" height="18" viewBox="0 0 16 18"><path d="M2 9l3-1m-3 6l3-2m0 4l2-2m4-9l2-3m-1 7l3 1m-5 2l2 3" stroke="#7a3b12" /><ellipse cx="7" cy="10" rx="3.500" ry="6" transform="rotate(40 7 10)" fill="#d07a2c" stroke="#7a3b12" strokeWidth=".6" /><path d="M4 13l6-6" stroke="#7a3b12" strokeWidth=".8" /><circle cx="12" cy="4.500" r="2.600" fill="#222" /><circle cx="11" cy="5.500" r="1.600" fill="#eee" /></svg>
          <svg width="11" height="18" viewBox="0 0 11 18"><path d="M0 17L11 6M4 17l7-7M8 17l3-3" stroke="#555" /></svg>
        </StatusIcons>
      </StatusBar>
      <Desktop>
        <Shelf width="874" height="33" viewBox="0 0 874 33">
          <defs><linearGradient id="shelf" x1="0" y1="0" x2="0" y2="1"><stop offset="0" stopColor="#646464" /><stop offset="1" stopColor="#8c8c8c" /></linearGradient></defs>
          <path d="M15 3h843l16 30H0z" fill="url(#shelf)" />
          <path d="M8 17c200 6 350-2 480 0s250-4 378-3l4 12H4z" fill="#4a4a4a" opacity=".5" />
          <path d="M3 26h867l2 4H1z" fill="#a5a5a5" />
          <path d="M1 30h872v1H1z" fill="#444" />
          <path d="M0 31h874v2H0z" fill="#ececec" />
        </Shelf>
        <DockRow>
          <DockIcons items={apps} />
          <Divider width="12" height="28" viewBox="0 0 12 28"><path d="M3 1h6M3 6h7M2 11h8M2 16h9M1 21h10M1 25h10" stroke="#aaa" strokeWidth="2" /></Divider>
          <DockIcons items={shortcuts} />
        </DockRow>
      </Desktop>
    </Screen>
  );
}
